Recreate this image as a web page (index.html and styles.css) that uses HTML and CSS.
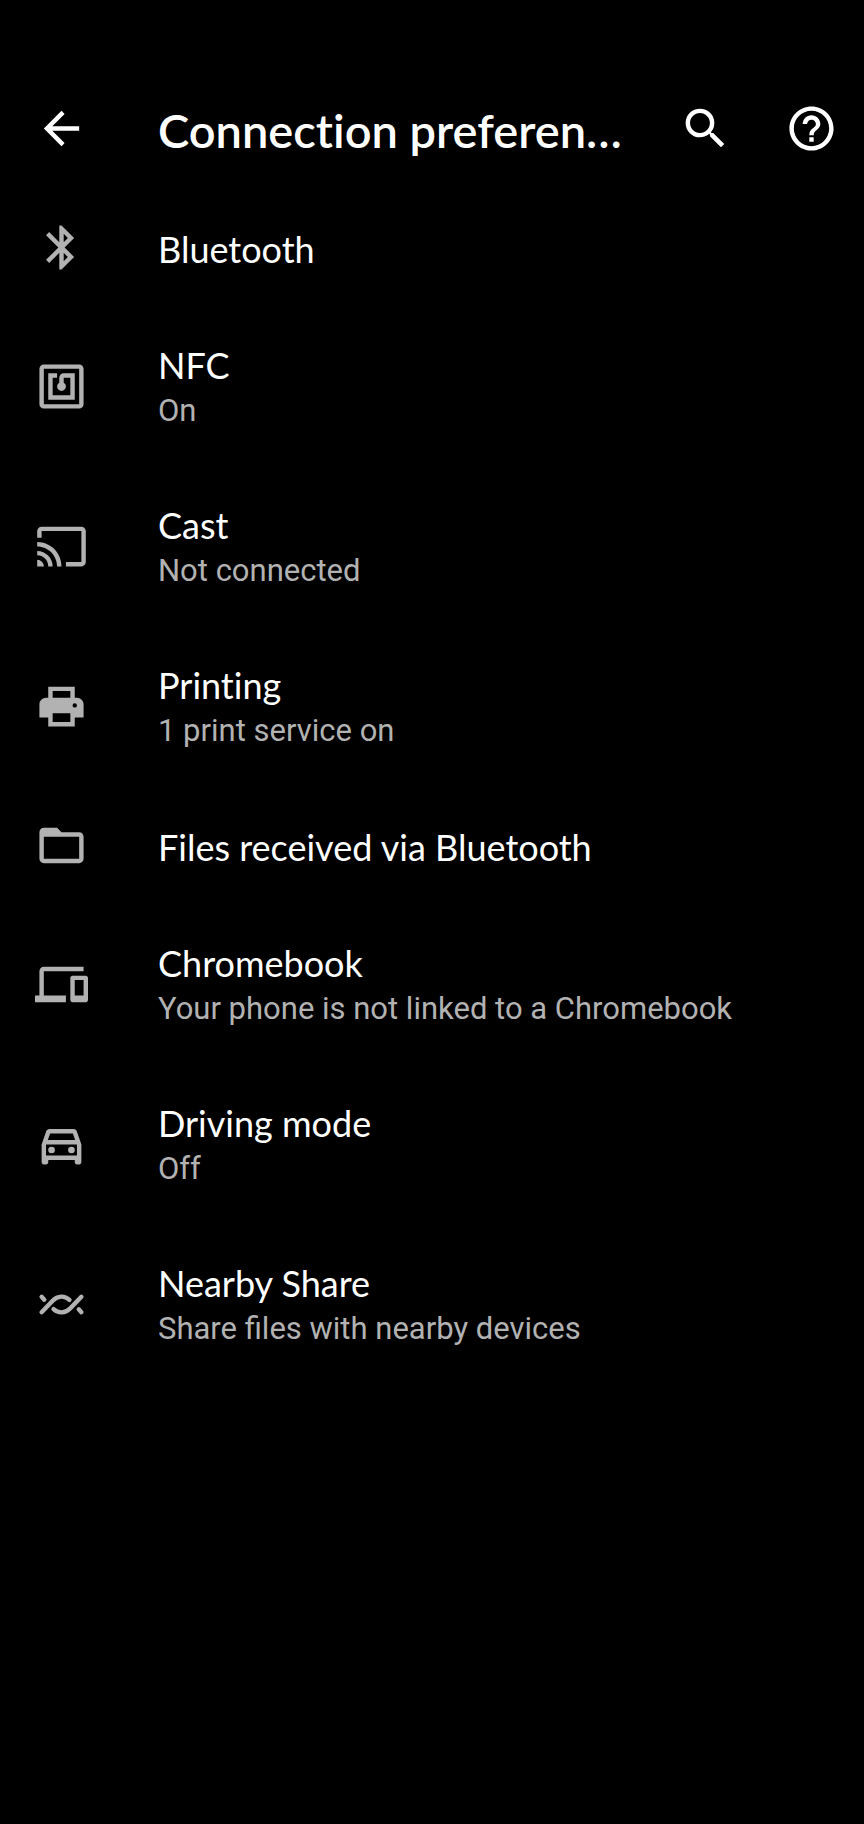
FILE: index.html
```html
<!DOCTYPE html>
<html lang="en">

<head>
  <meta charset="UTF-8">
  <meta name="viewport" content="width=device-width, initial-scale=1.0">
  <title>Connection preferences</title>
  <link rel="stylesheet" href="styles.css">
</head>

<body>
  <header class="toolbar">
    <button class="icon-button" type="button" aria-label="Back">
      <svg class="icon" viewBox="0 0 24 24"><path d="M20 11H7.83l5.59-5.59L12 4l-8 8 8 8 1.41-1.41L7.83 13H20v-2z"/></svg>
    </button>
    <h1 class="toolbar-title">Connection preferences</h1>
    <div class="toolbar-actions">
      <button class="icon-button" type="button" aria-label="Search">
        <svg class="icon" viewBox="0 0 24 24"><path d="M15.5 14h-.79l-.28-.27A6.471 6.471 0 0 0 16 9.5 6.5 6.5 0 1 0 9.5 16c1.61 0 3.09-.59 4.23-1.57l.27.28v.79l5 4.99L20.49 19l-4.99-5zm-6 0C7.01 14 5 11.99 5 9.5S7.01 5 9.5 5 14 7.01 14 9.5 11.99 14 9.5 14z"/></svg>
      </button>
      <button class="icon-button" type="button" aria-label="Help">
        <svg class="icon" viewBox="0 0 24 24"><path d="M11 18h2v-2h-2v2zm1-16C6.48 2 2 6.48 2 12s4.48 10 10 10 10-4.48 10-10S17.52 2 12 2zm0 18c-4.41 0-8-3.59-8-8s3.59-8 8-8 8 3.59 8 8-3.59 8-8 8zm0-14c-2.21 0-4 1.79-4 4h2c0-1.1.9-2 2-2s2 .9 2 2c0 2-3 1.75-3 5h2c0-2.25 3-2.5 3-5 0-2.21-1.79-4-4-4z"/></svg>
      </button>
    </div>
  </header>

  <main>
    <ul class="preferences">
      <li>
        <a class="preference" href="#bluetooth">
          <svg class="icon" viewBox="0 0 24 24"><path d="M17.71 7.71L12 2h-1v7.59L6.41 5 5 6.41 10.59 12 5 17.59 6.41 19 11 14.41V22h1l5.71-5.71-4.3-4.29 4.3-4.29zM13 5.83l1.88 1.88L13 9.59V5.83zm1.88 10.46L13 18.17v-3.76l1.88 1.88z"/></svg>
          <span class="text">
            <span class="title">Bluetooth</span>
          </span>
        </a>
      </li>
      <li>
        <a class="preference" href="#nfc">
          <svg class="icon" viewBox="0 0 24 24"><path d="M20 2H4c-1.1 0-2 .9-2 2v16c0 1.1.9 2 2 2h16c1.1 0 2-.9 2-2V4c0-1.1-.9-2-2-2zm0 18H4V4h16v16zM18 6h-5c-1.1 0-2 .9-2 2v2.28c-.6.35-1 .98-1 1.72 0 1.1.9 2 2 2s2-.9 2-2c0-.74-.4-1.38-1-1.72V8h3v8H8V8h2V6H6v12h12V6z"/></svg>
          <span class="text">
            <span class="title">NFC</span>
            <span class="summary">On</span>
          </span>
        </a>
      </li>
      <li>
        <a class="preference" href="#cast">
          <svg class="icon" viewBox="0 0 24 24"><path d="M21 3H3c-1.1 0-2 .9-2 2v3h2V5h18v14h-7v2h7c1.1 0 2-.9 2-2V5c0-1.1-.9-2-2-2zM1 18v3h3c0-1.66-1.34-3-3-3zm0-4v2c2.76 0 5 2.24 5 5h2c0-3.87-3.13-7-7-7zm0-4v2c4.97 0 9 4.03 9 9h2c0-6.08-4.93-11-11-11z"/></svg>
          <span class="text">
            <span class="title">Cast</span>
            <span class="summary">Not connected</span>
          </span>
        </a>
      </li>
      <li>
        <a class="preference" href="#printing">
          <svg class="icon" viewBox="0 0 24 24"><path fill-rule="evenodd" d="M6 3h12v5h1c1.66 0 3 1.34 3 3v6h-4v4H6v-4H2v-6c0-1.66 1.34-3 3-3h1V3zm2 2v3h8V5H8zm0 10v4h8v-4H8zm10-4.5a1 1 0 1 0 0 2 1 1 0 0 0 0-2z"/></svg>
          <span class="text">
            <span class="title">Printing</span>
            <span class="summary">1 print service on</span>
          </span>
        </a>
      </li>
      <li>
        <a class="preference" href="#received-files">
          <svg class="icon" viewBox="0 0 24 24"><path d="M20 6h-8l-2-2H4c-1.1 0-2 .9-2 2v12c0 1.1.9 2 2 2h16c1.1 0 2-.9 2-2V8c0-1.1-.9-2-2-2zm0 12H4V8h16v10z"/></svg>
          <span class="text">
            <span class="title">Files received via Bluetooth</span>
          </span>
        </a>
      </li>
      <li>
        <a class="preference" href="#chromebook">
          <svg class="icon" viewBox="0 0 24 24"><path d="M4 6h18V4H4c-1.1 0-2 .9-2 2v11H0v3h14v-3H4V6zm19 2h-6c-.55 0-1 .45-1 1v10c0 .55.45 1 1 1h6c.55 0 1-.45 1-1V9c0-.55-.45-1-1-1zm-1 9h-4v-7h4v7z"/></svg>
          <span class="text">
            <span class="title">Chromebook</span>
            <span class="summary">Your phone is not linked to a Chromebook</span>
          </span>
        </a>
      </li>
      <li>
        <a class="preference" href="#driving-mode">
          <svg class="icon" viewBox="0 0 24 24"><path d="M18.92 6.01C18.72 5.42 18.16 5 17.5 5h-11c-.66 0-1.21.42-1.42 1.01L3 12v8c0 .55.45 1 1 1h1c.55 0 1-.45 1-1v-1h12v1c0 .55.45 1 1 1h1c.55 0 1-.45 1-1v-8l-2.08-5.99zM6.85 7h10.29l1.04 3H5.81l1.04-3zM19 17H5v-5h14v5z"/><circle cx="7.5" cy="14.5" r="1.5"/><circle cx="16.5" cy="14.5" r="1.5"/></svg>
          <span class="text">
            <span class="title">Driving mode</span>
            <span class="summary">Off</span>
          </span>
        </a>
      </li>
      <li>
        <a class="preference" href="#nearby-share">
          <svg class="icon icon-stroked" viewBox="0 0 24 24"><path d="M3 15.5l5-5.2c2.3-2.4 5.4-2.4 7.6-.4M21 8.5l-5 5.2c-2.3 2.4-5.4 2.4-7.6.4M3 8.5l1.2 1.3M21 15.5l-1.2-1.3"/></svg>
          <span class="text">
            <span class="title">Nearby Share</span>
            <span class="summary">Share files with nearby devices</span>
          </span>
        </a>
      </li>
    </ul>
  </main>
</body>

</html>
```
FILE: styles.css
```css
/* Basic Style */
* {
  box-sizing: border-box;
}
body {
  margin: 0;
  min-height: 100vh;
  background: #000;
  color: #fff;
  font-family: Roboto, sans-serif;
}
.icon {
  display: block;
  flex: none;
  width: 53px;
  height: 53px;
  fill: currentColor;
}
.icon-stroked {
  fill: none;
  stroke: currentColor;
  stroke-width: 2;
  stroke-linecap: round;
}

/* Toolbar */
.toolbar {
  display: flex;
  align-items: center;
  padding: 98px 26px 30px 35px;
}
.icon-button {
  flex: none;
  padding: 0;
  border: 0;
  background: none;
  color: inherit;
  cursor: pointer;
}
.toolbar-title {
  flex: 1;
  min-width: 0;
  margin: 0 44px 0 70px;
  padding-top: 4px;
  overflow: hidden;
  white-space: nowrap;
  text-overflow: ellipsis;
  font-family: "Google Sans", Lato, sans-serif;
  font-size: 47px;
  font-weight: 600;
  font-variant-ligatures: no-common-ligatures;
  line-height: 56px;
}
.toolbar-actions {
  display: flex;
  gap: 53px;
}

/* Preference list */
.preferences {
  margin: 0;
  padding: 0;
  list-style: none;
}
.preference {
  display: flex;
  align-items: center;
  gap: 70px;
  padding: 33px 35px 32px;
  color: #b2b2b2;
  text-decoration: none;
}
.text {
  display: flex;
  flex-direction: column;
  min-width: 0;
  padding: 4px 0 1px;
}
.title {
  color: #fff;
  font-family: "Google Sans", Lato, sans-serif;
  font-size: 36px;
  font-variant-ligatures: no-common-ligatures;
  line-height: 45px;
}
.summary {
  font-size: 31px;
  line-height: 45px;
}
```
